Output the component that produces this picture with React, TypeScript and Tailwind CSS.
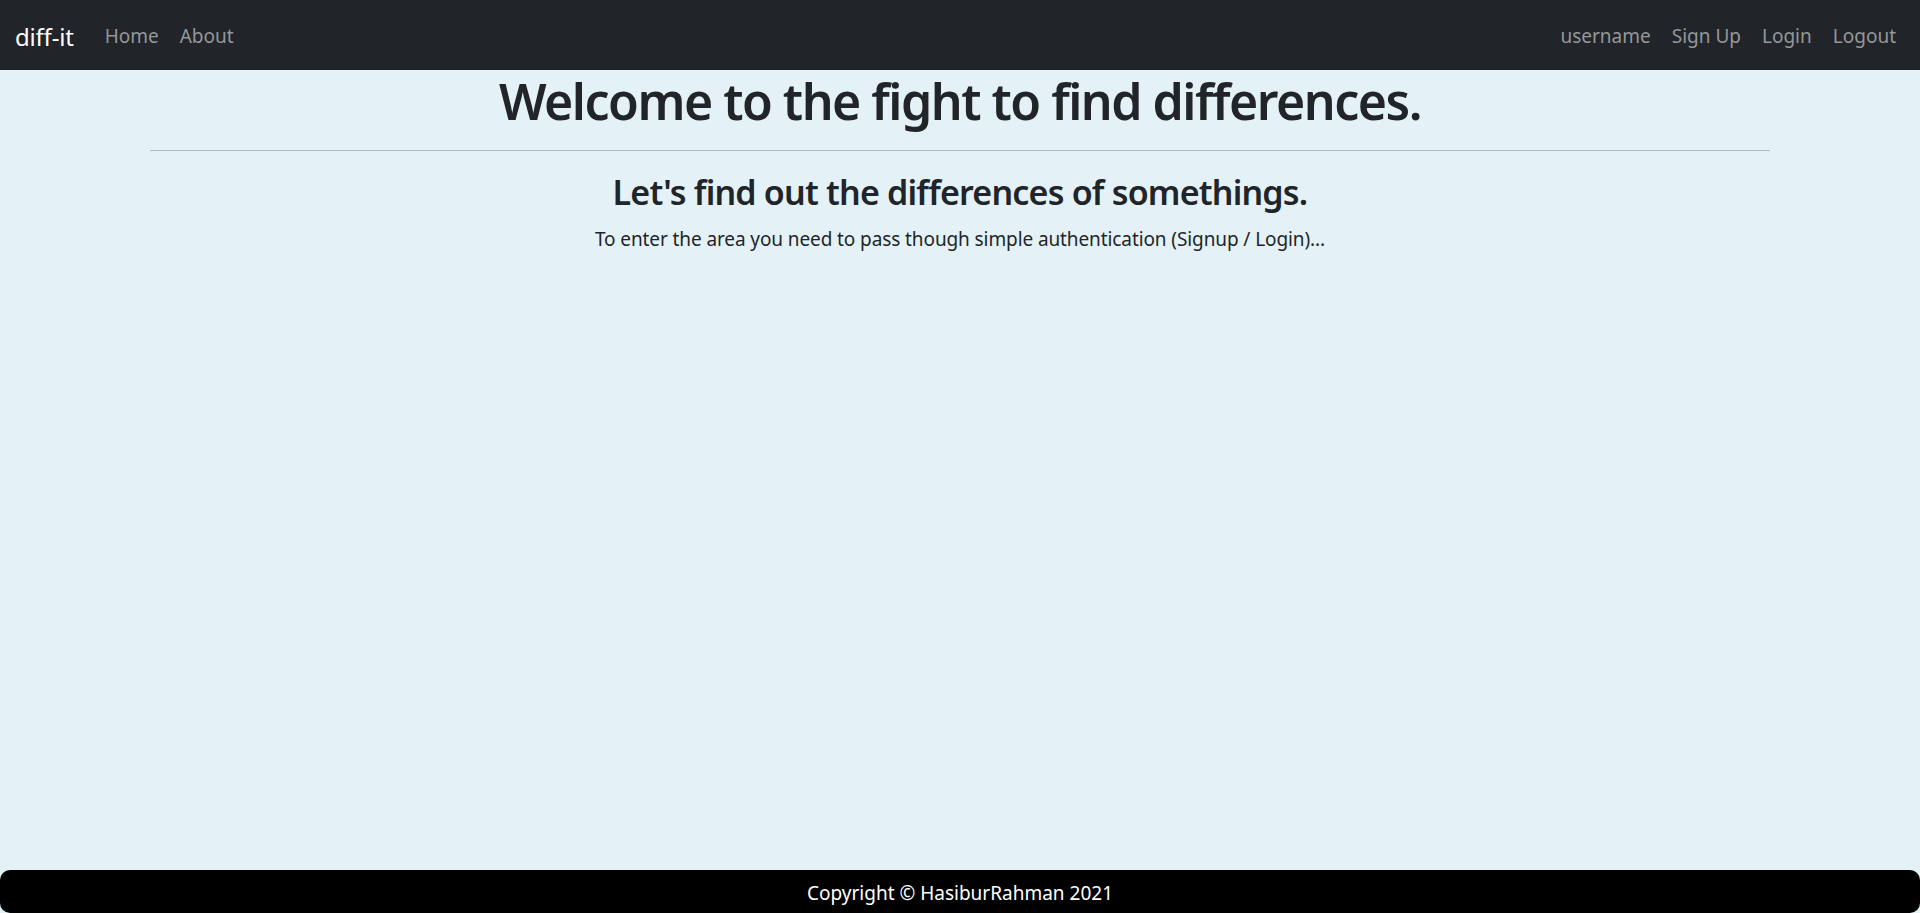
import React from "react";

export default function App() {
  const font = { fontFamily: '"Noto Sans", "Open Sans", sans-serif' };
  return (
    <div style={font} className="min-h-screen flex flex-col bg-[#e4f2f7] text-[#212529]">
      <nav className="h-[70px] bg-[#212529] flex items-center justify-between pl-[15px] pr-[24px] pt-[3px] shrink-0">
        <div className="flex items-center">
          <span className="text-white text-[24px] tracking-[-0.2px] mr-[31px]">diff-it</span>
          <a className="text-[19px] text-[#95979a] mr-[21px]">Home</a>
          <a className="text-[19px] text-[#95979a]">About</a>
        </div>
        <div className="flex items-center gap-[21px] text-[19px] text-[#95979a]">
          <a>username</a>
          <a>Sign Up</a>
          <a>Login</a>
          <a>Logout</a>
        </div>
      </nav>
      <main className="flex-1 flex flex-col items-center">
        <h1 className="text-[50px] leading-[1.2] font-semibold tracking-[-1.5px] mt-[1px] text-center">Welcome to the fight to find differences.</h1>
        <div className="w-[1620px] h-px bg-[#afbcc2] mt-[19px] mb-[21px]" />
        <h2 className="text-[34px] leading-[1.2] font-semibold tracking-[-0.8px] text-center">Let's find out the differences of somethings.</h2>
        <p className="text-[19px] leading-[1.5] mt-[12px] tracking-[-0.1px] text-center">To enter the area you need to pass though simple authentication (Signup / Login)...</p>
      </main>
      <footer className="h-[43px] bg-black rounded-[10px] flex items-center justify-center pt-[3px] text-white text-[19px] shrink-0">
        Copyright © HasiburRahman 2021
      </footer>
    </div>
  );
}
